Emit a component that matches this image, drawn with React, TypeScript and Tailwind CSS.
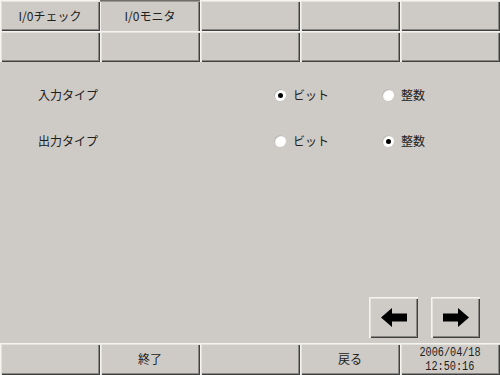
const face = 'bg-[#cecbc6]'
const raised =
  'shadow-[inset_1px_1px_0_#f4f3f0,inset_2px_2px_0_#e4e2dd,inset_-1px_-1px_0_#3f3f3f,inset_-2px_-2px_0_#8a8884]'
const jp = "font-['MS_Gothic','Noto_Sans_CJK_JP',sans-serif]"

function Cell({ label, active }: { label?: string; active?: boolean }) {
  return (
    <div
      className={`flex items-center justify-center text-[12px] text-[#202020] ${face} ${
        active
          ? 'shadow-[inset_0_1px_0_#6e6c68,inset_0_2px_0_#9a9894,inset_1px_0_0_#f4f3f0,inset_-1px_0_0_#3f3f3f,inset_-2px_0_0_#8a8884]'
          : raised
      }`}
    >
      {label}
    </div>
  )
}

function Radio({ checked, label }: { checked?: boolean; label: string }) {
  return (
    <div className="flex items-center gap-[7px]">
      <div className="w-[12px] h-[12px] rounded-full bg-[radial-gradient(circle_at_60%_60%,#ffffff_45%,#dcdad6_100%)] shadow-[inset_1px_1px_0_#b9b7b3] flex items-center justify-center">
        {checked && <div className="w-[5px] h-[5px] rounded-full bg-black" />}
      </div>
      <span className="text-[12px] text-[#202020]">{label}</span>
    </div>
  )
}

function Row({ label, bit }: { label: string; bit: boolean }) {
  return (
    <div className="flex items-center h-[24px]">
      <div className="w-[274px] pl-[38px] text-[12px] text-[#202020]">{label}</div>
      <div className="w-[108px]">
        <Radio checked={bit} label="ビット" />
      </div>
      <Radio checked={!bit} label="整数" />
    </div>
  )
}

function Arrow({ dir }: { dir: 'left' | 'right' }) {
  return (
    <div className={`w-[49px] h-[41px] flex items-center justify-center ${face} ${raised}`}>
      <svg width="26" height="19" viewBox="0 0 26 19" className={dir === 'right' ? 'scale-x-[-1]' : ''}>
        <polygon points="0,9.5 11,0 11,5.5 26,5.5 26,13.5 11,13.5 11,19" fill="#000" />
      </svg>
    </div>
  )
}

export default function App() {
  return (
    <div className={`w-[500px] h-[375px] flex flex-col ${face} ${jp}`}>
      <div className="grid grid-cols-5 grid-rows-[31px_31px]">
        <Cell label="I/0チェック" />
        <Cell label="I/0モニタ" active />
        <Cell />
        <Cell />
        <Cell />
        <Cell />
        <Cell />
        <Cell />
        <Cell />
        <Cell />
      </div>

      <div className="flex flex-col gap-[22px] pt-[21px]">
        <Row label="入力タイプ" bit={true} />
        <Row label="出力タイプ" bit={false} />
      </div>

      <div className="mt-auto flex justify-end gap-[13px] pr-[20px] pb-[5px]">
        <Arrow dir="left" />
        <Arrow dir="right" />
      </div>

      <div className="grid grid-cols-5 h-[32px]">
        <Cell />
        <Cell label="終了" />
        <Cell />
        <Cell label="戻る" />
        <div className={`flex flex-col items-center justify-center pt-[2px] ${face} ${raised}`}>
          <span className="font-['Liberation_Mono',monospace] text-[12px] leading-[14px] text-[#202020] scale-x-[0.85]">
            2006/04/18
          </span>
          <span className="font-['Liberation_Mono',monospace] text-[12px] leading-[14px] text-[#202020] scale-x-[0.85]">
            12:50:16
          </span>
        </div>
      </div>
    </div>
  )
}
